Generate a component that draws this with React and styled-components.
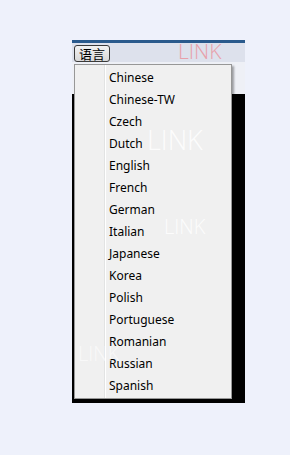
import styled, { createGlobalStyle } from 'styled-components';

const GlobalStyle = createGlobalStyle`
	html, body {
		margin: 0;
		padding: 0;
		background: #eef1fb;
		font-family: "Noto Sans", "Noto Sans CJK SC", sans-serif;
	}
`;

const Page = styled.div`
	width: 290px;
	height: 455px;
	padding-top: 40px;
	padding-left: 72px;
	box-sizing: border-box;
`;

const Window = styled.div`
	position: relative;
	width: 173px;
	display: flex;
	flex-direction: column;
`;

const TitleBar = styled.div`
	height: 3px;
	background: #2a5a8c;
`;

const Toolbar = styled.div`
	height: 19px;
	background: #dde1ec;
	display: flex;
	align-items: flex-end;
	padding-left: 2px;
	gap: 68px;
`;

const LangButton = styled.button`
	height: 17px;
	width: 36px;
	padding: 0;
	border: 1px solid #3a3a3a;
	border-radius: 3px;
	background: linear-gradient(#f2f2f2, #d8d8d8);
	font-family: "Noto Sans CJK SC", sans-serif;
	font-size: 13px;
	line-height: 15px;
	color: #000;
`;

const Mark = styled.span`
	font-family: "Open Sans", "Liberation Sans", sans-serif;
	font-weight: 300;
	font-size: ${p => p.size}px;
	line-height: 1;
	color: ${p => p.color};
	letter-spacing: ${p => p.spacing || 0}px;
`;

const Strip = styled.div`
	height: 32px;
	background: #eef0f6;
`;

const Content = styled.div`
	height: 309px;
	background: #000;
`;

const Menu = styled.ul`
	position: absolute;
	top: 24px;
	left: 2px;
	width: 158px;
	height: 335px;
	margin: 0;
	padding: 2px 0 3px;
	box-sizing: border-box;
	list-style: none;
	background: linear-gradient(to right, #f0f0f0 29px, #e2e3e3 29px, #e2e3e3 30px, #ffffff 30px, #ffffff 31px, #f0f0f0 31px);
	border: 1px solid #979797;
	box-shadow: 2px 2px 2px rgba(0, 0, 0, 0.35);
`;

const Item = styled.li`
	height: 22px;
	line-height: 22px;
	padding-left: 34px;
	font-size: 12px;
	color: #000;
`;

const Watermark = styled(Mark)`
	position: absolute;
	left: ${p => p.x}px;
	top: ${p => p.y}px;
	pointer-events: none;
`;

const languages = [
	'Chinese', 'Chinese-TW', 'Czech', 'Dutch', 'English', 'French', 'German',
	'Italian', 'Japanese', 'Korea', 'Polish', 'Portuguese', 'Romanian', 'Russian', 'Spanish'
];

export default function App() {
	return (
		<>
			<GlobalStyle />
			<Page>
				<Window>
					<TitleBar />
					<Toolbar>
						<LangButton>语言</LangButton>
						<Mark size={21} color="#e8a0aa">LINK</Mark>
					</Toolbar>
					<Strip />
					<Content />
					<Menu>
						{languages.map(lang => <Item key={lang}>{lang}</Item>)}
					</Menu>
					<Watermark x={75} y={86} size={27} color="rgba(255,255,255,0.85)">LINK</Watermark>
					<Watermark x={92} y={177} size={20} color="rgba(255,255,255,0.85)">LINK</Watermark>
					<Watermark x={6} y={304} size={20} color="rgba(255,255,255,0.6)">LINK</Watermark>
				</Window>
			</Page>
		</>
	);
}
